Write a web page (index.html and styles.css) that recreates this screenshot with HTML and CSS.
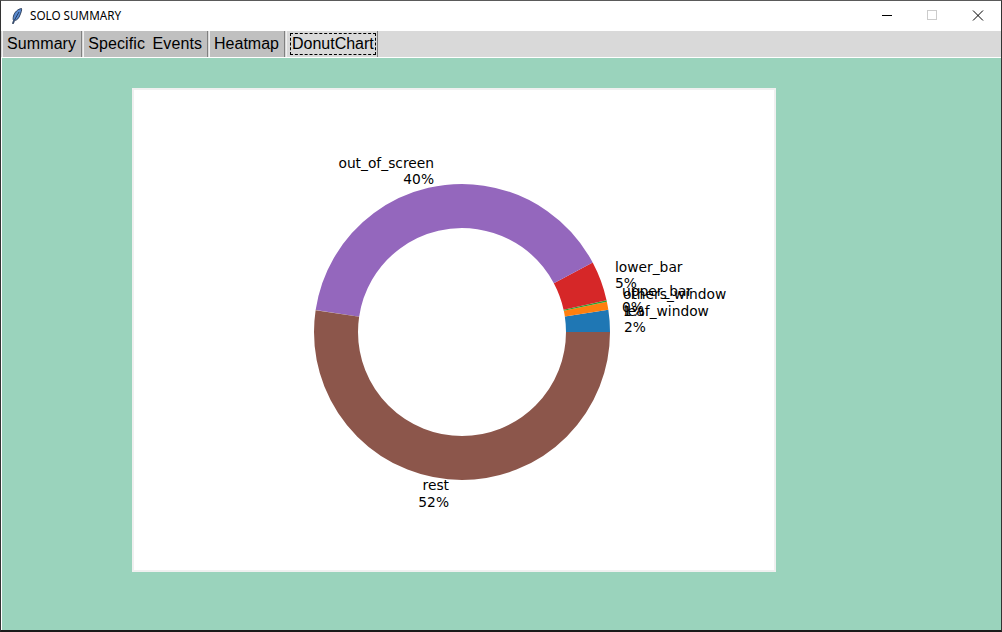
FILE: index.html
```html
<!doctype html>
<html lang="en">
  <head>
    <meta charset="utf-8">
    <title>SOLO SUMMARY</title>
    <link rel="stylesheet" href="styles.css">
  </head>
  <body>
    <div class="window">
      <div class="titlebar">
        <svg class="feather" width="12" height="16" viewBox="0 0 12 16">
          <path d="M10.5 0.5C7 1 3.5 4 2.5 8C2 10 2 11.5 2.5 12.5L1.5 15.5L2.5 15.5L3.5 12.5C6 12.5 8 10 9 7C10 4.5 11 2 10.5 0.5Z" fill="#5b8bd0" stroke="#14243f" stroke-width="0.8"/>
          <path d="M8 4L3.5 12" stroke="#14243f" stroke-width="0.8" fill="none"/>
        </svg>
        <span class="title">SOLO SUMMARY</span>
        <div class="controls">
          <svg class="ctl" width="46" height="30" viewBox="0 0 46 30"><path d="M19 14.5H29" stroke="#000" stroke-width="1" fill="none"/></svg>
          <svg class="ctl" width="46" height="30" viewBox="0 0 46 30"><rect x="18.5" y="9.5" width="9" height="9" stroke="#ccc" stroke-width="1" fill="none"/></svg>
          <svg class="ctl" width="46" height="30" viewBox="0 0 46 30"><path d="M18 9.5L28 19.5M28 9.5L18 19.5" stroke="#000" stroke-width="1" fill="none"/></svg>
        </div>
      </div>

      <div class="tabs">
        <div class="tab wide">Summary</div>
        <div class="tab wide">Specific Events</div>
        <div class="tab">Heatmap</div>
        <div class="tab active"><span class="focus">DonutChart</span></div>
      </div>

      <div class="content">
        <div class="canvas">
          <svg width="640" height="480" viewBox="0 0 640 480">
            <g class="donut">
              <circle cx="328" cy="242" r="126" stroke="#1f77b4" pathLength="360" stroke-dasharray="8.6 351.4" transform="rotate(-8.6 328 242)"/>
              <circle cx="328" cy="242" r="126" stroke="#ff7f0e" pathLength="360" stroke-dasharray="3.2 356.8" transform="rotate(-11.8 328 242)"/>
              <circle cx="328" cy="242" r="126" stroke="#2ca02c" pathLength="360" stroke-dasharray="0.6 359.4" transform="rotate(-12.4 328 242)"/>
              <circle cx="328" cy="242" r="126" stroke="#d62728" pathLength="360" stroke-dasharray="15.6 344.4" transform="rotate(-28 328 242)"/>
              <circle cx="328" cy="242" r="126" stroke="#9467bd" pathLength="360" stroke-dasharray="143.5 216.5" transform="rotate(-171.5 328 242)"/>
              <circle cx="328" cy="242" r="126" stroke="#8c564b" pathLength="360" stroke-dasharray="188.5 171.5"/>
            </g>
            <g class="labels">
              <text class="end" x="300" y="78">out_of_screen</text>
              <text class="end" x="300" y="94">40%</text>
              <text x="481" y="182">lower_bar</text>
              <text x="481" y="198">5%</text>
              <text x="488" y="206">upper_bar</text>
              <text x="488" y="222">0%</text>
              <text x="489" y="209">others_window</text>
              <text x="489" y="226">1%</text>
              <text x="490" y="226">leaf_window</text>
              <text x="490" y="242">2%</text>
              <text class="end" x="315" y="400">rest</text>
              <text class="end" x="315" y="417">52%</text>
            </g>
          </svg>
        </div>
      </div>
    </div>
  </body>
</html>
```

FILE: styles.css
```css
html, body {
  margin: 0;
  padding: 0;
}
body {
  background-color: #ffffff;
  overflow: hidden;
}
.window {
  width: 1002px;
  height: 632px;
  box-sizing: border-box;
  display: flex;
  flex-direction: column;
  border-top: 1px solid #5a5a5a;
  border-left: 1px solid #333333;
  border-right: 1px solid #333333;
  border-bottom: 2px solid #1a1a1a;
  background-color: #ffffff;
}
.titlebar {
  height: 30px;
  flex: none;
  display: flex;
  align-items: center;
  background-color: #ffffff;
}
.feather {
  margin-left: 10px;
  flex: none;
}
.title {
  margin-left: 7px;
  padding-bottom: 2px;
  font-family: "Noto Sans", sans-serif;
  font-size: 11.7px;
  color: #000000;
}
.controls {
  margin-left: auto;
  display: flex;
}
.ctl {
  display: block;
  flex: none;
}
.tabs {
  height: 26px;
  flex: none;
  box-sizing: border-box;
  display: flex;
  padding-left: 1px;
  gap: 1px;
  background-color: #d9d9d9;
}
.tab {
  height: 26px;
  box-sizing: border-box;
  padding: 0 5px 0 4px;
  display: flex;
  align-items: center;
  background-color: #c0c0c0;
  border-left: 1px solid #f0f0f0;
  border-right: 1px solid #808080;
  font-family: "Liberation Sans", Arial, sans-serif;
  font-size: 16px;
  color: #000000;
  white-space: pre;
}
.tab.wide {
  letter-spacing: 0.1px;
  word-spacing: 3px;
}
.tab.active {
  background-color: #d9d9d9;
  padding: 0 1px 0 3px;
}
.focus {
  display: block;
  padding: 0 1px;
  border: 1px dashed #000000;
  line-height: 20px;
}
.content {
  flex: 1;
  min-height: 0;
  border-top: 1px solid #ffffff;
  padding: 30px 0 0 130px;
  background-color: #9ad3bc;
  margin-left: 1px;
}
.canvas {
  width: 640px;
  height: 480px;
  border: 2px solid #f0f0f0;
  background-color: #ffffff;
}
.canvas svg {
  display: block;
}
.donut circle {
  fill: none;
  stroke-width: 44;
}
.labels text {
  font-family: "DejaVu Sans", sans-serif;
  font-size: 13.8px;
  fill: #000000;
}
.labels text.end {
  text-anchor: end;
}
```
